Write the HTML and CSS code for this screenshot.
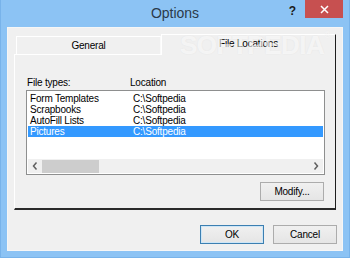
FILE: index.html
```html
<!DOCTYPE html>
<html lang="en">
<head>
    <meta charset="UTF-8">
    <title>Options</title>
    <link rel="stylesheet" href="styles.css">
</head>
<body>
    <div class="window">
        <div class="titlebar">
            <div></div>
            <div class="title">Options</div>
            <div class="controls">
                <span class="help">?</span>
                <div class="close">
                    <svg width="9" height="9" viewBox="0 0 9 9">
                        <path d="M1 1 L8 8 M8 1 L1 8" stroke="#fff" stroke-width="1.5" fill="none"/>
                    </svg>
                </div>
            </div>
        </div>

        <div class="client">
            <div class="tabs">
                <div class="tab">General</div>
                <div class="tab active">File Locations</div>
            </div>

            <div class="panel">
                <div class="headers">
                    <span class="col-type">File types:</span>
                    <span>Location</span>
                </div>

                <div class="listbox">
                    <div class="rows">
                        <div class="row"><span class="col-type">Form Templates</span><span>C:\Softpedia</span></div>
                        <div class="row"><span class="col-type">Scrapbooks</span><span>C:\Softpedia</span></div>
                        <div class="row"><span class="col-type">AutoFill Lists</span><span>C:\Softpedia</span></div>
                        <div class="row selected"><span class="col-type">Pictures</span><span>C:\Softpedia</span></div>
                    </div>
                    <div class="hscroll">
                        <svg class="arrow" width="6" height="8" viewBox="0 0 6 8">
                            <path d="M4.5 0.5 L1.5 4 L4.5 7.5" stroke="#606060" stroke-width="1.5" fill="none"/>
                        </svg>
                        <div class="track"><div class="thumb"></div></div>
                        <svg class="arrow" width="6" height="8" viewBox="0 0 6 8">
                            <path d="M1.5 0.5 L4.5 4 L1.5 7.5" stroke="#606060" stroke-width="1.5" fill="none"/>
                        </svg>
                    </div>
                </div>

                <div class="panel-actions">
                    <button class="btn">Modify...</button>
                </div>
            </div>

            <div class="dialog-actions">
                <button class="btn default">OK</button>
                <button class="btn">Cancel</button>
            </div>
        </div>

        <div class="watermark">SOFTPEDIA<span class="reg">®</span></div>
    </div>
</body>
</html>
```

FILE: styles.css
```css
* {
    margin: 0;
    padding: 0;
    box-sizing: border-box;
}

body {
    font-family: 'Liberation Sans', Arial, sans-serif;
    font-size: 10px;
    letter-spacing: -0.2px;
    color: #000;
    background: #8cc3f4;
}

.window {
    position: relative;
    width: 350px;
    height: 258px;
    background: #8cc3f4;
    border-left: 1px solid #78b3ea;
    border-right: 1px solid #78b3ea;
    border-bottom: 1px solid #78b3ea;
    display: flex;
    flex-direction: column;
}

/* Barra de título */
.titlebar {
    height: 27px;
    display: grid;
    grid-template-columns: 1fr auto 1fr;
}

.title {
    font-size: 14px;
    letter-spacing: 0;
    color: #2b3a4a;
    padding-top: 5px;
}

.controls {
    display: flex;
    justify-content: flex-end;
    align-items: flex-start;
    padding-right: 6px;
}

.help {
    font-size: 12px;
    font-weight: bold;
    color: #1b1b1b;
    margin-right: 9px;
    margin-top: 4px;
}

.close {
    width: 38px;
    height: 18px;
    background: #c75050;
    display: flex;
    justify-content: center;
    align-items: center;
}

/* Área do diálogo */
.client {
    flex: 1;
    margin: 0 6px 6px;
    background: #f0f0f0;
    border: 1px solid #f6f6f6;
    display: flex;
    flex-direction: column;
}

.tabs {
    display: flex;
    align-items: flex-end;
    padding-left: 8px;
    padding-right: 6px;
    margin-top: 5px;
    height: 21px;
}

.tab {
    width: 145px;
    height: 18px;
    border-top: 1px solid #fff;
    border-left: 1px solid #fff;
    border-right: 1px solid #fafafa;
    text-align: center;
    line-height: 17px;
}

.tab.active {
    flex: 1;
    height: 21px;
    margin-bottom: -1px;
    background: #f0f0f0;
    border-right: 1px solid #1e1e1e;
    position: relative;
    z-index: 1;
    line-height: 18px;
}

.panel {
    margin: 0 6px;
    height: 156px;
    border-top: 1px solid #fff;
    border-left: 1px solid #fff;
    border-right: 1px solid #1e1e1e;
    border-bottom: 2px solid #2a2a2a;
    padding: 21px 11px 0 11px;
    display: flex;
    flex-direction: column;
}

.headers {
    display: flex;
    height: 13px;
    line-height: 13px;
    padding-left: 1px;
    margin-bottom: 1px;
}

.col-type {
    width: 103px;
    flex-shrink: 0;
}

.listbox {
    height: 85px;
    margin-right: -1px;
    background: #fff;
    border: 1px solid #8e8f8f;
    padding: 1px;
    display: flex;
    flex-direction: column;
}

.rows {
    flex: 1;
    padding-top: 1px;
}

.row {
    display: flex;
    height: 11px;
    line-height: 11px;
    padding-left: 2px;
    white-space: nowrap;
}

.row.selected {
    background: #3399ff;
    color: #fff;
}

.hscroll {
    height: 14px;
    background: #f0f0f0;
    display: flex;
    align-items: center;
    padding: 0 4px;
    gap: 4px;
}

.track {
    flex: 1;
    height: 13px;
}

.thumb {
    width: 57px;
    height: 13px;
    background: #cdcdcd;
}

.panel-actions {
    display: flex;
    justify-content: flex-end;
    margin-top: 7px;
}

.btn {
    font-family: inherit;
    font-size: 10px;
    letter-spacing: -0.2px;
    color: #000;
    width: 64px;
    height: 19px;
    background: linear-gradient(to bottom, #f0f0f0, #e5e5e5);
    border: 1px solid #acacac;
}

.btn.default {
    border-color: #3c7fb1;
    box-shadow: inset 0 0 0 1px #cde6f7;
}

.dialog-actions {
    display: flex;
    justify-content: flex-end;
    gap: 9px;
    margin-top: 15px;
    padding-right: 5px;
}

/* Marca d'água */
.watermark {
    position: absolute;
    left: 179px;
    top: 30px;
    font-size: 26px;
    font-weight: bold;
    letter-spacing: -0.5px;
    color: rgba(255, 255, 255, 0.6);
    text-shadow: 0 0 2px rgba(0, 0, 0, 0.05);
    pointer-events: none;
    z-index: 5;
}

.reg {
    font-size: 9px;
    vertical-align: top;
    font-weight: normal;
}
```
